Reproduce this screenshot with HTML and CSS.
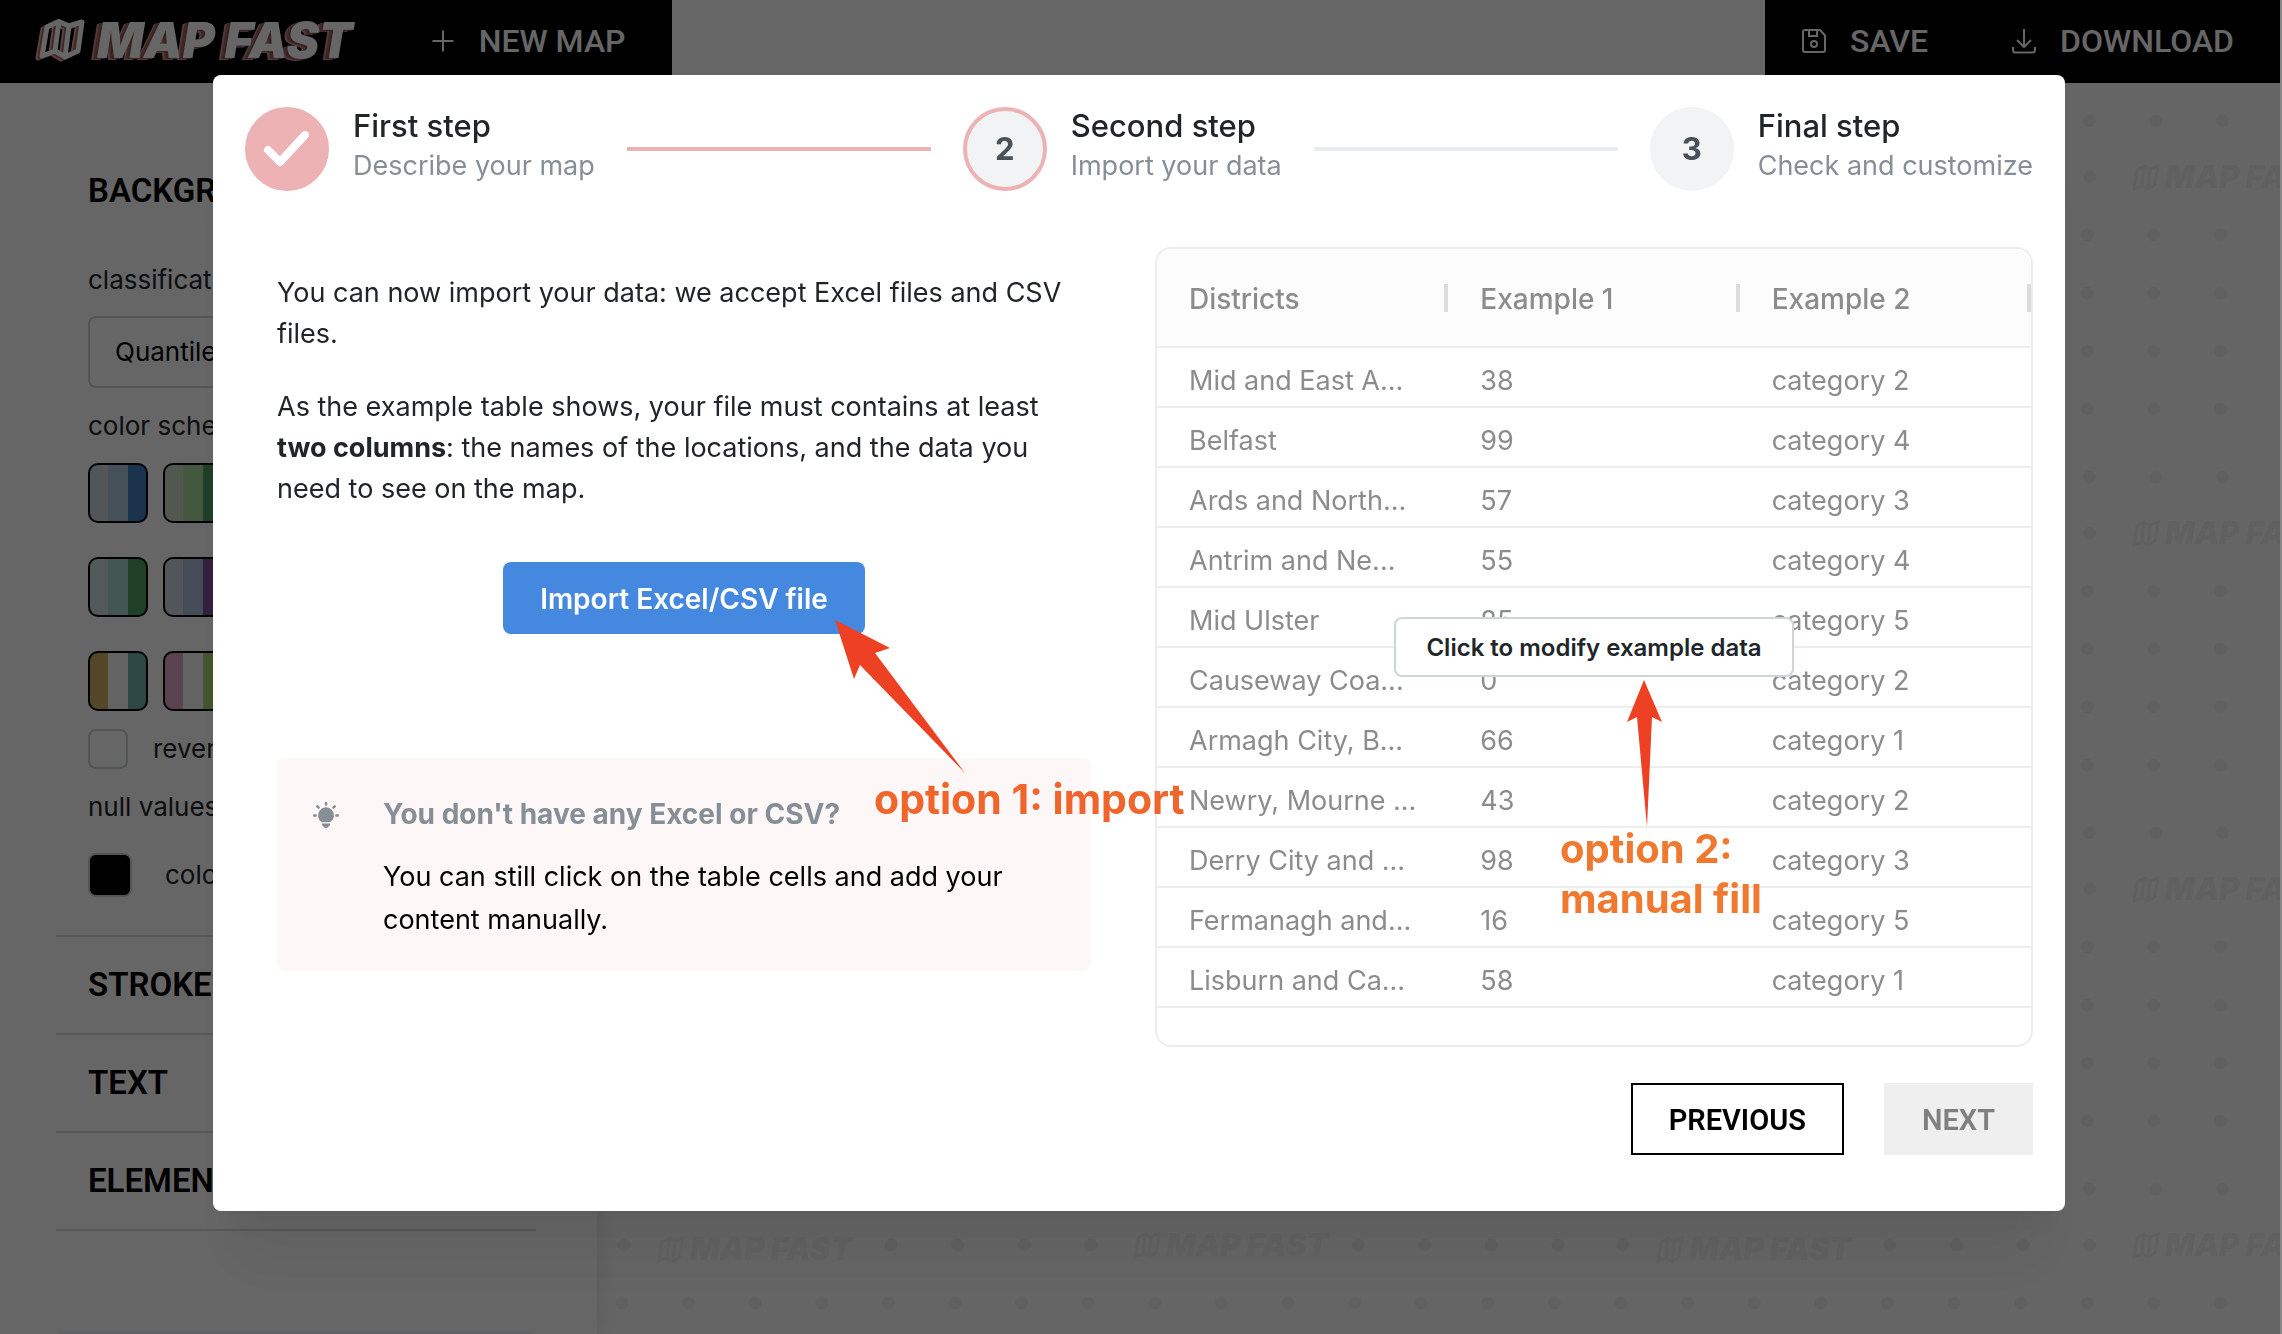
FILE: index.html
```html
<!DOCTYPE html>
<html lang="en">
<head>
<meta charset="utf-8">
<title>Map Fast</title>
<meta name="viewport" content="width=device-width, initial-scale=1">
<link rel="stylesheet" href="styles.css">
</head>
<body>
<div class="app">
  <header class="topbar">
    <div class="topbar-group">
      <a class="logo" href="#">
        <svg class="logo-mark" viewBox="0 0 54 44" aria-hidden="true">
          <g fill="none" stroke-width="5" stroke-linejoin="round" stroke-linecap="round">
            <path class="logo-far" d="M10 10 22 4 32 9 45 5 40 34 28 40 18 34 5 39ZM22 4 18 34M32 9 28 40"/>
            <path class="logo-near" d="M12 9 24 3 34 8 47 4 42 33 30 39 20 33 7 38ZM24 3 20 33M34 8 30 39"/>
            <path class="logo-face" d="M14 8 26 2.500 36 7 49 3 45 32 32 38 22 32 9 37ZM26 2.500 22 32M36 7 32 38"/>
          </g>
        </svg>
        <span class="logo-name">MAP FAST</span>
      </a>
      <button class="top-button" type="button">
        <svg class="icon" viewBox="0 0 24 24" aria-hidden="true"><path d="M12 1.500V22.500M1.500 12H22.500"/></svg>
        NEW MAP
      </button>
    </div>
    <div class="topbar-group topbar-actions">
      <button class="top-button" type="button">
        <svg class="icon" viewBox="0 0 24 24" aria-hidden="true"><path d="M3 1H18L23 6.500V21Q23 23 21 23H3Q1 23 1 21V3Q1 1 3 1ZM7 1V7H15V1"/><circle cx="12" cy="15" r="3"/></svg>
        SAVE
      </button>
      <button class="top-button" type="button">
        <svg class="icon" viewBox="0 0 24 24" aria-hidden="true"><path d="M12 0V17M5 11 12 18 19 11M1 18V21Q1 23.500 3.500 23.500H20.500Q23 23.500 23 21V18"/></svg>
        DOWNLOAD
      </button>
    </div>
  </header>

  <div class="workspace">
    <aside class="sidebar">
      <section class="panel">
        <h2 class="panel-title">BACKGROUND</h2>
        <div class="panel-body">
          <label class="field-label" for="classification">classification</label>
          <select class="select" id="classification"><option>Quantiles</option></select>
          <p class="field-label">color scheme</p>
          <div class="schemes">
            <button class="scheme blues" type="button" aria-label="Blues"></button>
            <button class="scheme greens" type="button" aria-label="Greens"></button>
            <button class="scheme teal" type="button" aria-label="Teal greens"></button>
            <button class="scheme purples" type="button" aria-label="Blue purples"></button>
            <button class="scheme earth" type="button" aria-label="Brown teal"></button>
            <button class="scheme pinks" type="button" aria-label="Pink green"></button>
          </div>
          <label class="option"><input class="checkbox" type="checkbox">reverse</label>
          <p class="field-label null-label">null values</p>
          <label class="option"><input class="color" type="color" value="#000000">color</label>
        </div>
      </section>
      <section class="panel"><h2 class="panel-title">STROKE</h2></section>
      <section class="panel"><h2 class="panel-title">TEXT</h2></section>
      <section class="panel"><h2 class="panel-title">ELEMENTS</h2></section>
      <div class="sidebar-card"></div>
    </aside>
    <main class="map">
      <svg class="map-pattern" aria-hidden="true">
        <defs>
          <path id="mark" d="M4 5 11 1 17 4 25 1 22 20 15 24 9 21 1 24ZM11 1 9 21M17 4 15 24"/>
          <pattern id="tile" patternUnits="userSpaceOnUse" x="0" y="2" width="999" height="356">
            <g class="dots">
              <path d="M27 36H999"/>
              <path d="M27 92H28M294 92H495M761 92H1000"/>
              <path d="M25 150H999M25 208H999M25 266H999M25 324H999"/>
            </g>
            <g class="watermark">
              <use href="#mark" x="61" y="84"/><text x="93" y="107">MAP FAST</text>
              <use href="#mark" x="537" y="80"/><text x="569" y="103">MAP FAST</text>
            </g>
          </pattern>
        </defs>
        <rect width="100%" height="100%" fill="url(#tile)"/>
      </svg>
    </main>
  </div>
</div>

<div class="overlay">
  <div class="modal" role="dialog" aria-modal="true" aria-label="Import your data">
    <ol class="stepper">
      <li class="step">
        <span class="step-circle done"><svg viewBox="0 0 48 40" aria-hidden="true"><path d="M5 21 17 33 42 6"/></svg></span>
        <span class="step-text"><span class="step-title">First step</span><span class="step-note">Describe your map</span></span>
      </li>
      <li class="step-line reached" aria-hidden="true"></li>
      <li class="step">
        <span class="step-circle current">2</span>
        <span class="step-text"><span class="step-title">Second step</span><span class="step-note">Import your data</span></span>
      </li>
      <li class="step-line" aria-hidden="true"></li>
      <li class="step">
        <span class="step-circle">3</span>
        <span class="step-text"><span class="step-title">Final step</span><span class="step-note">Check and customize</span></span>
      </li>
    </ol>

    <div class="columns">
      <div class="intro">
        <p>You can now import your data: we accept Excel files and CSV files.</p>
        <p>As the example table shows, your file must contains at least <strong>two columns</strong>: the names of the locations, and the data you need to see on the map.</p>
        <button class="import-button" type="button">Import Excel/CSV file</button>
        <div class="notice">
          <svg class="bulb" viewBox="0 0 26 26" aria-hidden="true">
            <path class="bulb-body" d="M9 20.300A8 8 0 1 1 17 20.300ZM9 21.500H17V23Q16.500 24 15.500 24.500 15 26 13 26T10.500 24.500Q9.500 24 9 23Z"/>
            <path class="bulb-rays" d="M13 1V2.500M4.300 4.300 5.500 5.500M21.700 4.300 20.500 5.500M1 13.500H2.600M23.400 13.500H25"/>
          </svg>
          <div>
            <h3 class="notice-title">You don't have any Excel or CSV?</h3>
            <p class="notice-text">You can still click on the table cells and add your content manually.</p>
          </div>
        </div>
      </div>

      <div class="table-box">
        <table class="table">
          <thead><tr><th>Districts</th><th>Example 1</th><th>Example 2</th></tr></thead>
          <tbody>
            <tr><td>Mid and East A...</td><td>38</td><td>category 2</td></tr>
            <tr><td>Belfast</td><td>99</td><td>category 4</td></tr>
            <tr><td>Ards and North...</td><td>57</td><td>category 3</td></tr>
            <tr><td>Antrim and Ne...</td><td>55</td><td>category 4</td></tr>
            <tr><td>Mid Ulster</td><td>85</td><td>category 5</td></tr>
            <tr><td>Causeway Coa...</td><td>0</td><td>category 2</td></tr>
            <tr><td>Armagh City, B...</td><td>66</td><td>category 1</td></tr>
            <tr><td>Newry, Mourne ...</td><td>43</td><td>category 2</td></tr>
            <tr><td>Derry City and ...</td><td>98</td><td>category 3</td></tr>
            <tr><td>Fermanagh and...</td><td>16</td><td>category 5</td></tr>
            <tr><td>Lisburn and Ca...</td><td>58</td><td>category 1</td></tr>
          </tbody>
        </table>
        <div class="table-cover"><button class="modify-button" type="button">Click to modify example data</button></div>
      </div>
    </div>

    <div class="modal-actions">
      <button class="action" type="button">PREVIOUS</button>
      <button class="action next" type="button" disabled>NEXT</button>
    </div>
  </div>

  <svg class="arrows" aria-hidden="true">
    <path d="M835 620 890 648 875 653 965 773 860 665 854 679Z"/>
    <path d="M1644 680 1662 722 1652 717 1647 827 1637 717 1627 722Z"/>
  </svg>
  <p class="note note-import">option 1: import</p>
  <p class="note note-manual">option 2:<br>manual fill</p>
</div>
</body>
</html>
```
FILE: styles.css
```css
* { box-sizing: border-box; }

body {
  margin: 0;
  background: #888;
  color: #212529;
  font-family: Inter, "Liberation Sans", sans-serif;
  font-size: 26px;
  line-height: 44px;
  overflow: hidden;
}

h2, h3, p, ol { margin: 0; padding: 0; }
button, select { font: inherit; color: inherit; }
button { border: 0; padding: 0; }

/* App shell */
.app {
  display: flex;
  flex-direction: column;
  height: 100vh;
  margin-right: 2px;
  background: #fff;
}

.topbar { display: flex; justify-content: space-between; }

.topbar-group {
  display: flex;
  align-items: center;
  gap: 78px;
  height: 83px;
  padding: 0 46px 2px 33px;
  background: #000;
}
.topbar-actions { gap: 84px; padding-left: 37px; }

.logo { display: flex; align-items: center; gap: 10px; color: #fff; text-decoration: none; }
.logo-mark { width: 54px; height: 44px; }
.logo-far { stroke: #f0a5a5; }
.logo-near { stroke: #9e6464; }
.logo-face { stroke: #fff; }
.logo-name {
  font-size: 49px;
  font-weight: 900;
  font-style: italic;
  text-shadow: -2px 1px 0 #8a5656, -4px 1px 0 #9e6464, -6px 2px 0 #d09090;
}

.top-button {
  display: flex;
  align-items: center;
  gap: 24px;
  background: none;
  color: #fff;
  font-family: Roboto, sans-serif;
  font-size: 32px;
  font-weight: 500;
}
.icon { width: 24px; height: 24px; fill: none; stroke: #fff; stroke-width: 2; overflow: visible; }

.workspace { display: flex; flex: 1; min-height: 0; }

/* Sidebar */
.sidebar {
  position: relative;
  z-index: 1;
  flex: none;
  width: 597px;
  padding: 60px 61px 0 56px;
  overflow: hidden;
  box-shadow: 0 0 24px rgba(0, 0, 0, .12);
}
.panel { border-bottom: 2px solid #dadada; }
.panel-title {
  padding: 0 32px;
  color: #000;
  font-family: Roboto, sans-serif;
  font-size: 33px;
  font-weight: 600;
  line-height: 96px;
}
.panel-body { padding: 19px 32px 38px; }
.field-label { display: block; font-size: 26px; }
.select {
  appearance: none;
  display: block;
  width: 100%;
  height: 72px;
  margin: 14px 0 16px;
  padding: 0 25px;
  border: 2px solid #ced4da;
  border-radius: 8px;
  background: none;
  color: #000;
}
.schemes {
  display: grid;
  grid-template-columns: 60px 60px;
  gap: 34px 15px;
  margin: 15px 0 16px;
}
.scheme { height: 60px; border: 2px solid #000; border-radius: 10px; }
.blues { background: linear-gradient(90deg, #ccd8e2 33%, #acc8dc 33% 67%, #467fc2 67%); }
.greens { background: linear-gradient(90deg, #cddac6 33%, #aadc9e 33% 67%, #4e9e64 67%); }
.teal { background: linear-gradient(90deg, #cde0de 33%, #a8d7cb 33% 67%, #529d62 67%); }
.purples { background: linear-gradient(90deg, #cdd7e0 33%, #a8beda 33% 67%, #80529e 67%); }
.earth { background: linear-gradient(90deg, #d2b266 33%, #f7f7f7 33% 67%, #73b2aa 67%); }
.pinks { background: linear-gradient(90deg, #e1a5ca 33%, #f7f7f7 33% 67%, #acd476 67%); }
.option { display: flex; align-items: center; gap: 25px; }
.checkbox {
  appearance: none;
  width: 40px;
  height: 40px;
  margin: 0;
  border: 2px solid #ced4da;
  border-radius: 8px;
}
.null-label { margin: 14px 0 24px; }
.color {
  appearance: none;
  width: 44px;
  height: 44px;
  margin: 0 8px 0 0;
  padding: 0;
  border: 2px solid #ced4da;
  border-radius: 8px;
  background: #000;
}
.color::-webkit-color-swatch-wrapper { padding: 0; }
.color::-webkit-color-swatch { border: 0; border-radius: 6px; }
.sidebar-card { height: 120px; margin-top: 100px; border-radius: 8px; background: #f1f3f5; }

/* Map canvas */
.map { flex: 1; min-width: 0; background: #fdfdfd; }
.map-pattern { display: block; width: 100%; height: 100%; }
.dots path { fill: none; stroke: #f0f0f0; stroke-width: 13; stroke-linecap: round; stroke-dasharray: 0 66.600; }
.watermark { fill: #f1f1f1; font-size: 31px; font-weight: 900; font-style: italic; }
.watermark use { fill: none; stroke: #f1f1f1; stroke-width: 3; }

/* Modal */
.overlay {
  position: fixed;
  inset: 0 2px 0 0;
  z-index: 2;
  padding: 75px 215px 0 213px;
  background: rgba(0, 0, 0, .6);
}
.modal {
  padding: 32px 32px 56px;
  border-radius: 8px;
  background: #fff;
  box-shadow: 0 2px 6px rgba(0, 0, 0, .05), 0 72px 56px -14px rgba(0, 0, 0, .05), 0 34px 24px -14px rgba(0, 0, 0, .04);
}

.stepper { display: flex; align-items: center; gap: 32px; list-style: none; }
.step { display: flex; align-items: center; gap: 24px; }
.step-circle {
  display: flex;
  align-items: center;
  justify-content: center;
  width: 84px;
  height: 84px;
  border: 4px solid #f1f3f5;
  border-radius: 50%;
  background: #f1f3f5;
  color: #495057;
  font-size: 31px;
  font-weight: 700;
}
.step-circle.current { border-color: #ecb2b4; }
.step-circle.done { border-color: #ecb2b4; background: #ecb2b4; }
.step-circle svg { width: 48px; height: 40px; fill: none; stroke: #fff; stroke-width: 8; stroke-linecap: round; stroke-linejoin: round; }
.step-text { display: flex; flex-direction: column; padding-bottom: 4px; }
.step-title { font-size: 31px; font-weight: 500; line-height: 38px; }
.step-note { color: #868e96; font-size: 27px; line-height: 42px; }
.step-line { flex: 1; height: 4px; background: #e9ecef; }
.step-line.reached { background: #ecb2b4; }

.columns { display: grid; grid-template-columns: 1fr 1fr; gap: 32px; margin-top: 56px; }
.intro { display: flex; flex-direction: column; padding: 25px 32px 0; font-size: 27px; line-height: 41px; }
.intro > p { margin-bottom: 32px; }
.import-button {
  align-self: center;
  height: 72px;
  margin-top: 21px;
  padding: 2px 37px 0;
  border-radius: 8px;
  background: #4588df;
  color: #fff;
  font-size: 28px;
  font-weight: 600;
}
.notice {
  display: flex;
  gap: 44px;
  margin-top: 124px;
  padding: 33px 36px 30px;
  border-radius: 8px;
  background: #fdf7f7;
}
.bulb { flex: none; width: 26px; height: 26px; margin-top: 11px; }
.bulb-body { fill: #868e96; }
.bulb-rays { stroke: #868e96; stroke-width: 2.500; stroke-linecap: round; }
.notice-title { margin-bottom: 18px; color: #868e96; font-size: 28px; font-weight: 700; line-height: 46px; }
.notice-text { color: #000; line-height: 43px; }

.table-box {
  position: relative;
  height: 800px;
  overflow: hidden;
  border: 2px solid #ededed;
  border-radius: 16px;
}
.table { width: 100%; border-collapse: collapse; table-layout: fixed; color: #8c8c8c; font-size: 27px; }
.table th, .table td {
  height: 60px;
  padding: 8px 0 0 32px;
  border-bottom: 2px solid #ededed;
  line-height: 48px;
  text-align: left;
  white-space: nowrap;
}
.table th {
  height: 98px;
  padding-top: 2px;
  background: linear-gradient(#dcdcdc, #dcdcdc) right center / 4px 28px no-repeat #fcfcfc;
  font-size: 28px;
  font-weight: 500;
}
.table-cover { position: absolute; inset: 0; display: flex; align-items: center; justify-content: center; }
.modify-button {
  height: 60px;
  padding: 1px 30px 0;
  border: 2px solid #ced4da;
  border-radius: 8px;
  background: #fff;
  font-size: 24px;
  font-weight: 600;
}

.modal-actions { display: flex; justify-content: flex-end; gap: 40px; margin-top: 36px; }
.action {
  height: 72px;
  padding: 1px 36px 0;
  border: 2px solid #000;
  background: #fff;
  color: #000;
  font-family: Roboto, sans-serif;
  font-size: 29px;
  font-weight: 600;
}
.action.next { border-color: #efefef; background: #efefef; color: #808080; }

/* Annotations drawn over the dialog */
.arrows { position: absolute; inset: 0; width: 100%; height: 100%; fill: #ee4023; pointer-events: none; }
.note { position: absolute; font-size: 40px; font-weight: 700; line-height: 50px; }
.note-import { left: 874px; top: 774px; color: #f0652b; font-size: 41px; }
.note-manual { left: 1560px; top: 824px; color: #f0792f; }
```
